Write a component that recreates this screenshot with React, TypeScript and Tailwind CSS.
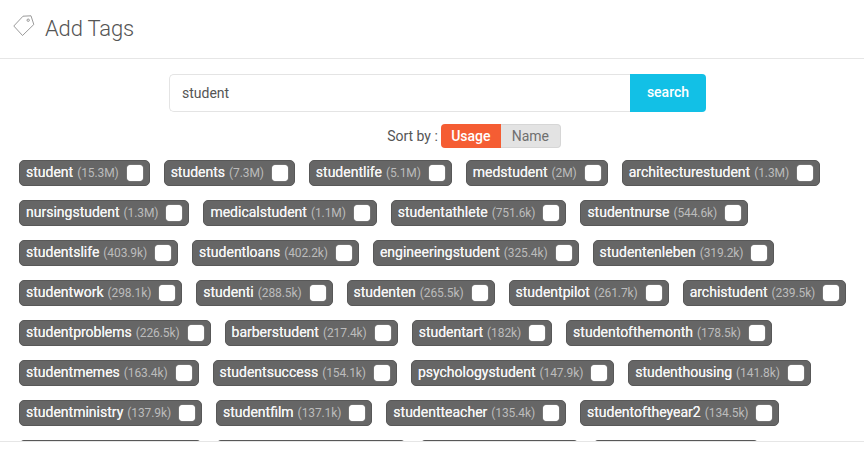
const rows: [string, string][][] = [
  [["student","15.3M"],["students","7.3M"],["studentlife","5.1M"],["medstudent","2M"],["architecturestudent","1.3M"]],
  [["nursingstudent","1.3M"],["medicalstudent","1.1M"],["studentathlete","751.6k"],["studentnurse","544.6k"]],
  [["studentslife","403.9k"],["studentloans","402.2k"],["engineeringstudent","325.4k"],["studentenleben","319.2k"]],
  [["studentwork","298.1k"],["studenti","288.5k"],["studenten","265.5k"],["studentpilot","261.7k"],["archistudent","239.5k"]],
  [["studentproblems","226.5k"],["barberstudent","217.4k"],["studentart","182k"],["studentofthemonth","178.5k"]],
  [["studentmemes","163.4k"],["studentsuccess","154.1k"],["psychologystudent","147.9k"],["studenthousing","141.8k"]],
  [["studentministry","137.9k"],["studentfilm","137.1k"],["studentteacher","135.4k"],["studentoftheyear2","134.5k"]],
];

function Chip({ name, count }: { name: string; count: string }) {
  return (
    <label className="flex h-[26px] items-center whitespace-nowrap rounded-[5px] border border-[#585858] bg-[#666666] pl-[6px] pr-[6px]">
      <span className="-mt-[2px] text-[14px] font-normal leading-none text-[#f4f4f4] [text-shadow:0_0_0.6px_#ffffff]">{name}</span>
      <span className="-mt-[1px] ml-[4px] text-[12px] leading-none tracking-[-0.1px] text-[#bcbcbc]">({count})</span>
      <span className="ml-[8px] h-[16px] w-[16px] rounded-[4px] bg-white shadow-[0_0_1px_#ffffff]" />
    </label>
  );
}

export default function App() {
  return (
    <div className="flex h-[454px] w-[864px] flex-col overflow-hidden bg-white font-['Roboto',sans-serif]">
      <header className="flex h-[59px] shrink-0 items-center gap-[10px] border-b border-[#e6e6e6] pl-[12px]">
        <svg width="22" height="22" viewBox="0 0 22 22" fill="none" stroke="#808080" strokeWidth="0.8" className="-mt-[7px] ml-[1px]">
          <path d="M0.8 11 L10 1.2 L18 0.8 L20.8 9.5 L9.5 20.5 Z" strokeLinejoin="round" />
          <circle cx="15.2" cy="5.2" r="1.2" />
        </svg>
        <h1 className="-mt-[1px] text-[22px] font-light leading-none tracking-[-0.15px] text-[#555555]">Add Tags</h1>
      </header>
      <main className="min-h-0 flex-1 overflow-hidden">
        <div className="mt-[15px] flex justify-center">
          <div className="ml-[11px] flex h-[38px] w-[537px]">
            <div className="flex flex-1 items-center rounded-l-[5px] border border-r-0 border-[#e4e4e4] pl-[12px] text-[14px] text-[#555555]">student</div>
            <button className="w-[76px] rounded-r-[4px] bg-[#12c0e6] pb-[2px] text-[14px] font-medium text-white">search</button>
          </div>
        </div>
        <div className="mt-[12px] flex items-center justify-center pl-[84px]">
          <span className="mr-[3px] text-[14px] text-[#555555]">Sort by :</span>
          <div className="flex h-[24px] text-[14px] leading-none">
            <span className="flex w-[60px] items-center justify-center rounded-l-[4px] bg-[#f55d33] font-medium text-white">Usage</span>
            <span className="flex w-[60px] items-center justify-center rounded-r-[4px] border border-l-0 border-[#d6d6d6] bg-[#e3e3e3] text-[#6f6f6f]">Name</span>
          </div>
        </div>
        <div className="mt-[12px] flex flex-col gap-[14px] pl-[19px]">
          {rows.map((row, i) => (
            <div key={i} className="flex gap-[14px]">
              {row.map(([n, c]) => (
                <Chip key={n} name={n} count={c} />
              ))}
            </div>
          ))}
          <div className="flex gap-[14px]">
            <div className="h-[26px] w-[183px] rounded-[5px] border border-[#585858] bg-[#666666]" />
            <div className="h-[26px] w-[190px] rounded-[5px] border border-[#585858] bg-[#666666]" />
            <div className="h-[26px] w-[159px] rounded-[5px] border border-[#585858] bg-[#666666]" />
            <div className="h-[26px] w-[166px] rounded-[5px] border border-[#585858] bg-[#666666]" />
          </div>
        </div>
      </main>
      <footer className="h-[13px] shrink-0 border-t border-[#e6e6e6] bg-white" />
    </div>
  );
}
